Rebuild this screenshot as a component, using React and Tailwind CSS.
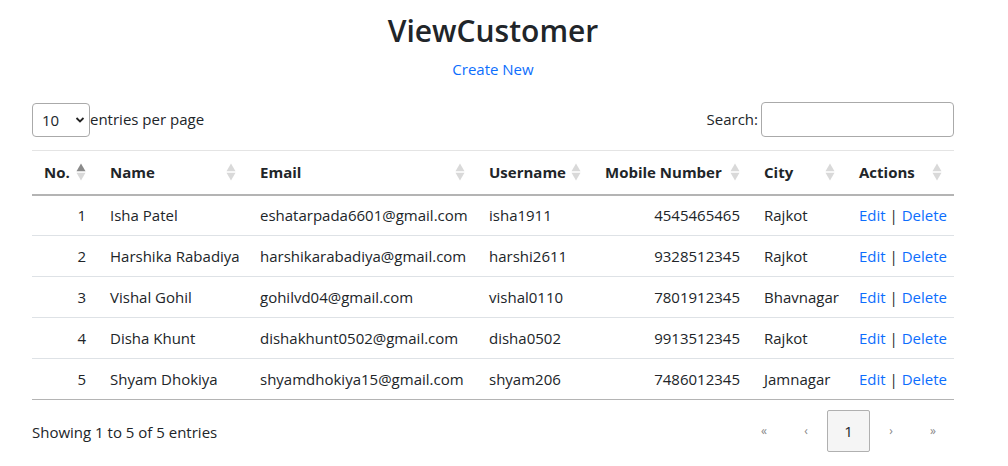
import React from "react";

const customers = [
  { id: 1, name: "Isha Patel", email: "eshatarpada6601@gmail.com", username: "isha1911", mobile: "4545465465", city: "Rajkot" },
  { id: 2, name: "Harshika Rabadiya", email: "harshikarabadiya@gmail.com", username: "harshi2611", mobile: "9328512345", city: "Rajkot" },
  { id: 3, name: "Vishal Gohil", email: "gohilvd04@gmail.com", username: "vishal0110", mobile: "7801912345", city: "Bhavnagar" },
  { id: 4, name: "Disha Khunt", email: "dishakhunt0502@gmail.com", username: "disha0502", mobile: "9913512345", city: "Rajkot" },
  { id: 5, name: "Shyam Dhokiya", email: "shyamdhokiya15@gmail.com", username: "shyam206", mobile: "7486012345", city: "Jamnagar" },
];

const columns = [
  { label: "No.", width: "w-[66px]", active: true },
  { label: "Name", width: "w-[150px]" },
  { label: "Email", width: "w-[229px]" },
  { label: "Username", width: "w-[116px]" },
  { label: "Mobile Number", width: "w-[159px]" },
  { label: "City", width: "w-[95px]" },
  { label: "Actions", width: "w-[107px]" },
];

const Sorter = ({ active }) => (
  <svg width="10" height="18" viewBox="0 0 10 18" className="absolute right-[12px] top-1/2 -translate-y-1/2">
    <polygon points="0.5,8.3 5,0.5 9.5,8.3" fill={active ? "#8a8a8a" : "#d9d9d9"} />
    <polygon points="0.5,9.7 5,17.5 9.5,9.7" fill="#d9d9d9" />
  </svg>
);

const App = () => {
  return (
    <div className="min-h-[466px] bg-white text-[#212529] text-[15px]" style={{ fontFamily: '"Open Sans", "Noto Sans", sans-serif' }}>
      <div className="ml-[32px] w-[922px]">
        <h1 className="pt-[12px] text-center text-[30px] font-semibold leading-[38px]">ViewCustomer</h1>
        <div className="mt-[8px] text-center leading-[22px]">
          <a href="#" className="text-[#0d6efd]">Create New</a>
        </div>

        <div className="mt-[22px] flex items-center justify-between">
          <div className="flex items-center">
            <div className="relative h-[34px] w-[58px] rounded-[4px] border border-[#aaaaaa]">
              <span className="absolute left-[9px] top-1/2 -translate-y-1/2 leading-none">10</span>
              <svg width="10" height="8" viewBox="0 0 10 8" className="absolute right-[4px] top-1/2 -translate-y-1/2">
                <path d="M1.5 2 L5 5.5 L8.5 2" stroke="#222" strokeWidth="1.8" fill="none" />
              </svg>
            </div>
            <span>entries per page</span>
          </div>
          <div className="flex items-center">
            <span className="mr-[3px]">Search:</span>
            <input className="h-[35px] w-[193px] rounded-[4px] border border-[#aaaaaa] outline-none" />
          </div>
        </div>

        <table className="mt-[13px] w-[922px] table-fixed border-collapse">
          <thead>
            <tr className="border-t border-[#e4e4e4] border-b-2 border-b-[#b4b4b4]">
              {columns.map((col) => (
                <th key={col.label} className={`${col.width} relative h-[44px] px-[12px] text-left font-bold whitespace-nowrap`}>
                  {col.label}
                  <Sorter active={col.active} />
                </th>
              ))}
            </tr>
          </thead>
          <tbody>
            {customers.map((c, i) => (
              <tr key={c.id} className={i === customers.length - 1 ? "border-b border-[#b4b4b4]" : "border-b border-[#dee2e6]"}>
                <td className="h-[41px] px-[12px] text-right">{c.id}</td>
                <td className="px-[12px] whitespace-nowrap">{c.name}</td>
                <td className="px-[12px] whitespace-nowrap">{c.email}</td>
                <td className="px-[12px]">{c.username}</td>
                <td className="px-[12px] text-right">{c.mobile}</td>
                <td className="px-[12px]">{c.city}</td>
                <td className="px-[12px] whitespace-nowrap">
                  <a href="#" className="text-[#0d6efd]">Edit</a> | <a href="#" className="text-[#0d6efd]">Delete</a>
                </td>
              </tr>
            ))}
          </tbody>
        </table>

        <div className="mt-[10px] flex items-center justify-between">
          <span className="mt-[2px]">Showing 1 to 5 of 5 entries</span>
          <div className="flex items-center text-[12px] text-[#888888]">
            <span className="w-[42px] text-center">«</span>
            <span className="w-[42px] text-center">‹</span>
            <span className="flex h-[42px] w-[43px] items-center justify-center rounded-[2px] border border-[#b0b0b0] bg-[#f5f5f5] text-[15px] text-[#212529]">1</span>
            <span className="w-[42px] text-center">›</span>
            <span className="w-[42px] text-center">»</span>
          </div>
        </div>
      </div>
    </div>
  );
};

export default App;
